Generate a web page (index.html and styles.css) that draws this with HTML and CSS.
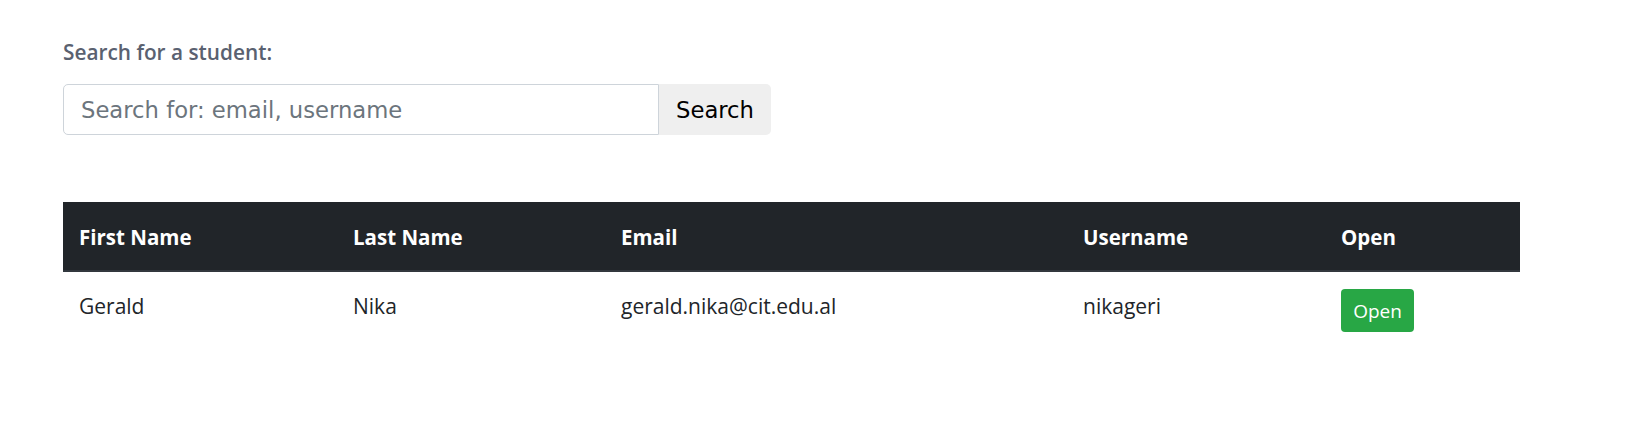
FILE: index.html
```html
<!DOCTYPE html>
<html lang="en">
<head>
<meta charset="utf-8">
<title>Students</title>
<link rel="stylesheet" href="styles.css">
</head>
<body>
<main class="page">
  <section class="search">
    <label class="search-label" for="q">Search for a student:</label>
    <form class="search-group" onsubmit="return false">
      <input class="search-input" id="q" type="text" placeholder="Search for: email, username">
      <button class="search-btn" type="submit">Search</button>
    </form>
  </section>

  <table class="students">
    <colgroup>
      <col class="c-first">
      <col class="c-last">
      <col class="c-email">
      <col class="c-user">
      <col class="c-open">
    </colgroup>
    <thead>
      <tr>
        <th>First Name</th>
        <th>Last Name</th>
        <th>Email</th>
        <th>Username</th>
        <th>Open</th>
      </tr>
    </thead>
    <tbody>
      <tr>
        <td>Gerald</td>
        <td>Nika</td>
        <td>gerald.nika@cit.edu.al</td>
        <td>nikageri</td>
        <td><button class="open-btn" type="button">Open</button></td>
      </tr>
    </tbody>
  </table>
</main>
</body>
</html>
```

FILE: styles.css
```css
* { box-sizing: border-box; }

html, body {
  margin: 0;
  padding: 0;
  background: #ffffff;
}

body {
  font-family: "Open Sans", "Noto Sans", sans-serif;
  color: #212529;
}

.page {
  padding: 37px 0 0 63px;
  width: 1520px;
}

.search {
  display: flex;
  flex-direction: column;
  align-items: flex-start;
}

.search-label {
  font-size: 20.8px;
  font-weight: 600;
  color: #5a6170;
  line-height: 30px;
  margin-bottom: 17px;
}

.search-group {
  display: flex;
  margin: 0;
}

.search-input {
  width: 596px;
  height: 51px;
  border: 1px solid #ced4da;
  border-radius: 5px 0 0 5px;
  padding: 0 17px;
  font-family: "DejaVu Sans", Verdana, sans-serif;
  font-size: 22.7px;
  color: #495057;
  background: #fff;
  outline: none;
}

.search-input::placeholder {
  color: #6c757d;
  opacity: 1;
}

.search-btn {
  width: 112px;
  height: 51px;
  border: none;
  border-radius: 0 5px 5px 0;
  background: #efefef;
  font-family: "DejaVu Sans", Verdana, sans-serif;
  font-size: 22.7px;
  color: #000;
  padding: 0;
}

.students {
  margin-top: 67px;
  width: 1457px;
  border-collapse: collapse;
  table-layout: fixed;
}

.c-first { width: 274px; }
.c-last { width: 268px; }
.c-email { width: 462px; }
.c-user { width: 258px; }
.c-open { width: 195px; }

.students th {
  background: #212529;
  color: #ffffff;
  font-size: 20.5px;
  font-weight: 700;
  text-align: left;
  padding: 17px 16px 15px;
  line-height: 36px;
  border-bottom: 2px solid #32383e;
  vertical-align: middle;
}

.students td {
  font-size: 21px;
  padding: 17px 16px 16px;
  line-height: 34px;
  vertical-align: top;
  color: #212529;
}

.open-btn {
  display: block;
  width: 73px;
  height: 43px;
  border: none;
  border-radius: 4px;
  background: #28a745;
  color: #ffffff;
  font-family: "Open Sans", "Noto Sans", sans-serif;
  font-size: 19px;
  padding: 0;
}
```
